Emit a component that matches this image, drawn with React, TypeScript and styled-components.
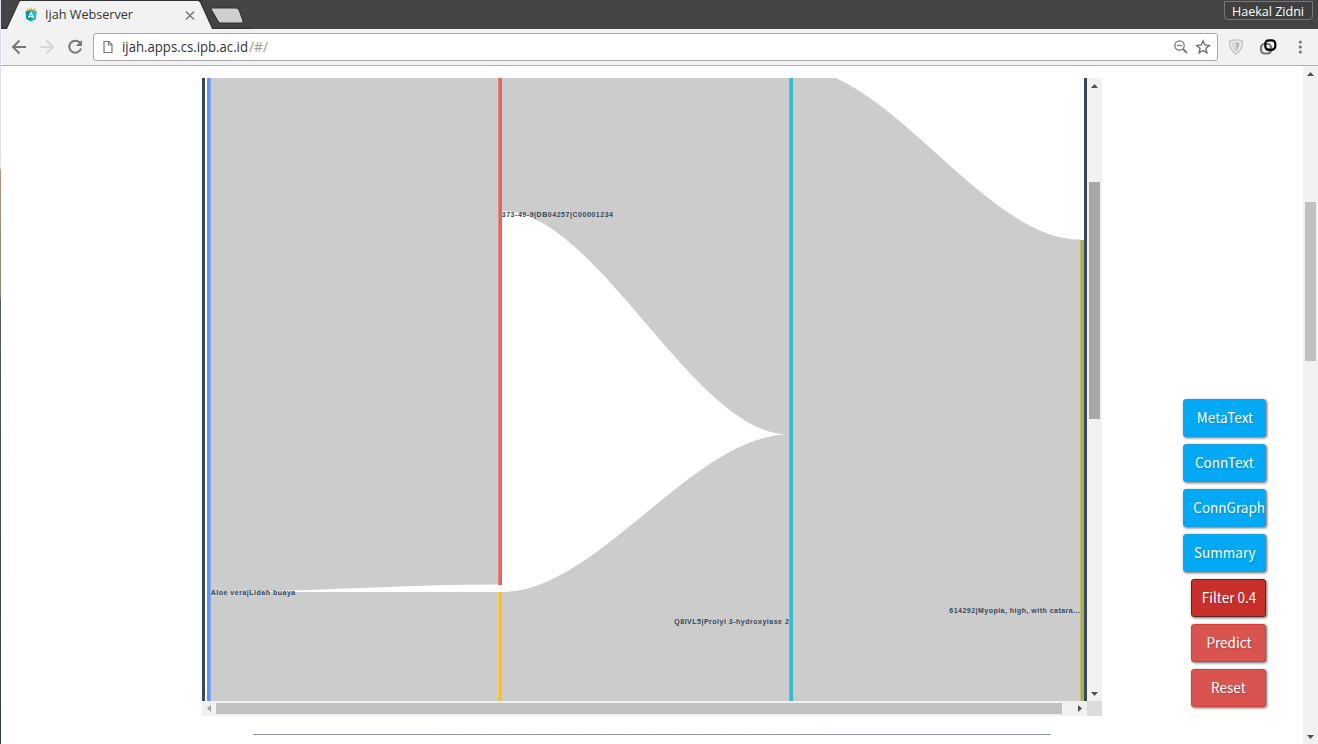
import React from "react";
import styled, { createGlobalStyle } from "styled-components";

const Global = createGlobalStyle`
  * { box-sizing: border-box; }
  html, body { margin: 0; padding: 0; background: #fff; overflow: hidden; }
  svg { display: block; flex: none; }
`;

const Screen = styled.div`
  display: flex;
  width: 1318px;
  height: 744px;
  overflow: hidden;
  font-family: "Open Sans", sans-serif;
`;

const DesktopEdge = styled.div`
  flex: none;
  width: 1px;
  background: linear-gradient(#dcdeea 0 168px, #b7937a 170px, #a08a76 240px, #97826f 295px, #4b5f5c 302px, #3f4f50 500px, #34403f 744px);
`;

const Window = styled.div`
  flex: 1;
  min-width: 0;
  display: flex;
  flex-direction: column;
`;

const TabStrip = styled.header`
  display: flex;
  justify-content: space-between;
  height: 29px;
  background: #444;
`;

const Tab = styled.div`
  position: relative;
  display: flex;
  align-items: center;
  width: 250px;
  height: 29px;
`;

const TabShape = styled.svg`
  position: absolute;
  left: 0;
  top: 0;
`;

const TabContent = styled.div`
  position: relative;
  display: flex;
  align-items: center;
  padding-left: 24px;
`;

const FittedText = styled.svg`
  overflow: visible;
`;

const Profile = styled.div`
  display: flex;
  width: 89px;
  height: 19px;
  margin: 1px 5px 0 0;
  padding: 0 0 0 7px;
  background: #3f3f3f;
  border: 1px solid #777;
  border-radius: 1px 1px 4px 4px;
`;

const Toolbar = styled.div`
  display: flex;
  align-items: center;
  height: 37px;
  padding: 0 0 1px 10px;
  background: #f2f2f2;
  border-bottom: 1px solid #b3b3b3;
`;

const NavIcons = styled.div`
  display: flex;
  gap: 12px;
`;

const AddressBar = styled.div`
  display: flex;
  align-items: center;
  width: 1125px;
  height: 28px;
  margin-left: 10px;
  padding: 0 6px 0 8px;
  background: #fff;
  border: 1px solid #aaa;
  border-radius: 3px;
`;

const Spacer = styled.div`
  flex: 1;
`;

const Page = styled.main`
  flex: 1;
  min-height: 0;
  display: flex;
`;

const Content = styled.div`
  width: 1101px;
  padding: 12px 0 0 201px;
`;

const ChartFrame = styled.section`
  display: grid;
  grid-template-columns: 885px 15px;
  grid-template-rows: 623px 15px;
  width: 900px;
`;

const ChartView = styled.div`
  border: solid #34495e;
  border-width: 0 3px;
`;

const Track = styled.div<{ $horizontal?: boolean }>`
  display: flex;
  flex-direction: ${(p) => (p.$horizontal ? "row" : "column")};
  align-items: center;
  background: #f1f1f1;
`;

const Thumb = styled.div<{ $w: number; $h: number; $color: string }>`
  width: ${(p) => p.$w}px;
  height: ${(p) => p.$h}px;
  background: ${(p) => p.$color};
`;

const Gap = styled.div<{ $size: number }>`
  flex: 0 0 ${(p) => p.$size}px;
`;

const Corner = styled.div`
  background: #dcdcdc;
`;

const Rule = styled.div`
  margin: 6px 0 0 51px;
  width: 799px;
  white-space: nowrap;
  font: 10.79px/14px "Liberation Sans", sans-serif;
  color: #6f7488;
`;

const Actions = styled.aside`
  flex: 1;
  display: flex;
  flex-direction: column;
  align-items: flex-end;
  gap: 7px;
  padding: 333px 36.7px 0 0;
`;

const ActionButton = styled.button<{ $kind: "info" | "danger" | "active" }>`
  display: flex;
  align-items: center;
  justify-content: center;
  width: ${(p) => (p.$kind === "info" ? 83 : 75.5)}px;
  height: 38px;
  padding: 0 0 2px;
  white-space: nowrap;
  color: #fff;
  font: 14.4px/20px "Noto Sans CJK SC", sans-serif;
  background: ${(p) => ({ info: "#03a9f4", danger: "#d9534f", active: "#c9302c" })[p.$kind]};
  border: 1px solid ${(p) => ({ info: "#1b9fe0", danger: "#d43f3a", active: "#5f2523" })[p.$kind]};
  border-radius: 3px;
  box-shadow: 1px 1px 3px rgba(0, 0, 0, 0.6);
  text-shadow: 1px 1px 2px rgba(0, 0, 0, 0.2);
`;

const Caption = styled.span<{ $offset?: number }>`
  display: inline-block;
  margin-left: ${(p) => p.$offset ?? 0}px;
  transform: scaleX(0.94);
`;

const Action = ({ kind, offset, children }: { kind: "info" | "danger" | "active"; offset?: number; children: string }) => (
  <ActionButton $kind={kind}>
    <Caption $offset={offset}>{children}</Caption>
  </ActionButton>
);

const Arrow = ({ dir, color = "#505050", width = 15 }: { dir: "up" | "down" | "left" | "right"; color?: string; width?: number }) => {
  const paths = { up: "M4 10 7.5 6 11 10z", down: "M4 6 7.5 10 11 6z", left: "M9 4 5 7.5 9 11z", right: "M6 4 10 7.5 6 11z" };
  return (
    <svg width={width} height="15" fill={color}>
      <path d={paths[dir]} />
    </svg>
  );
};

const labelStyle = { fontFamily: '"Liberation Sans", sans-serif', fontWeight: 700, fontSize: 7, fill: "#34495e" };

const nodes = [
  { x: 2, y: 0, h: 623, color: "#6495f0", edge: "#84acf5", edgeX: 5 },
  { x: 293, y: 0, h: 507, color: "#e0665e", edge: "#e98983", edgeX: 293 },
  { x: 293, y: 514, h: 109, color: "#f6c233", edge: "#f6c95b", edgeX: 293 },
  { x: 584, y: 0, h: 623, color: "#35bccd", edge: "#57c4d1", edgeX: 584 },
  { x: 875, y: 162, h: 461, color: "#acae4c", edge: "#bcbd77", edgeX: 875 },
];

const Sankey = () => (
  <svg width="879" height="623">
    <rect x="6" width="869" height="623" fill="#ccc" />
    <path fill="#fff" d="M588-10.400C683.700-10.400 779.300 161.500 875 161.500H879V-10.400z" />
    <path fill="#fff" d="M297 133C392.700 133 488.300 356.500 584 356.500C488.300 356.500 392.700 514 297 514z" />
    <path fill="#fff" d="M6 514C101.700 514 197.300 506.500 293 506.500H297V514z" />
    {nodes.map((n, i) => (
      <g key={i}>
        <rect x={n.x} y={n.y} width="4" height={n.h} fill={n.color} />
        <rect x={n.edgeX} y={n.y} width="1" height={n.h} fill={n.edge} />
      </g>
    ))}
    <g style={labelStyle}>
      <text x="5.700" y="517" textLength="84.500">Aloe vera|Lidah buaya</text>
      <text x="296.700" y="139" textLength="111.300">373-49-9|DB04257|C00001234</text>
      <text x="469.300" y="546" textLength="114.500">Q8IVL5|Prolyl 3-hydroxylase 2</text>
      <text x="744.300" y="535" textLength="130.700">614292|Myopia, high, with catara...</text>
    </g>
  </svg>
);

export default function App() {
  return (
    <>
      <Global />
      <Screen>
        <DesktopEdge />
        <Window>
          <TabStrip>
            <Tab>
              <TabShape width="250" height="29">
                <path d="M0 28.5H6L19 1H199L211 28.5H250" fill="none" stroke="#343434" strokeWidth="2" />
                <path d="M6 29 18.5 2Q19 1 20 1H197Q198 1 199 2.500L211 29z" fill="#f2f2f2" />
                <path d="M211 8H235Q237 8 238 10L242 21Q242.500 23 241 23H220Q218 23 217 21L210 9Q210 8 211 8z" fill="#cfcfcf" stroke="#303030" />
              </TabShape>
              <TabContent>
                <svg width="12" height="15" viewBox="0 0 12 15">
                  <path d="M1.500 4 2 1 4 2.500 6 0 8 2.500 11 1 10.500 5z" fill="#fbc02d" />
                  <path d="M.5 4.500 6 3 11.500 4.500 10.800 12 6 14.500 1.200 12z" fill="#0097a7" />
                  <path d="M6 3 11.500 4.500 10.800 12 6 14.500z" fill="#26b9cf" />
                  <path d="M3.500 11 6 5.500 8.500 11M4.500 9.500H7.500" fill="none" stroke="#e9ffff" strokeWidth="1.200" />
                </svg>
                <FittedText width="141" height="20">
                  <text x="8" y="14" fontSize="13.500" fill="#333" textLength="88" lengthAdjust="spacingAndGlyphs">Ijah Webserver</text>
                </FittedText>
                <svg width="24" height="20"><path d="M8 6.500 16 14.500M16 6.500 8 14.500" stroke="#808080" strokeWidth="1.700" /></svg>
              </TabContent>
            </Tab>
            <Profile>
              <FittedText width="72" height="18">
                <text x="0" y="14" fontSize="13" fill="#fff" textLength="72" lengthAdjust="spacingAndGlyphs">Haekal Zidni</text>
              </FittedText>
            </Profile>
          </TabStrip>
          <Toolbar>
            <NavIcons>
              <svg width="16" height="16" fill="none" stroke="#777" strokeWidth="2"><path d="M15 8H2M8.500 1.500 2 8 8.500 14.500" /></svg>
              <svg width="16" height="16" fill="none" stroke="#d8d8d8" strokeWidth="2"><path d="M1 8H14M7.500 1.500 14 8 7.500 14.500" /></svg>
              <svg width="16" height="16" fill="none" stroke="#777" strokeWidth="2"><path d="M13.200 4.200A6 6 0 1 0 14 9.500" /><path d="M15 1V7H9z" fill="#777" stroke="none" /></svg>
            </NavIcons>
            <AddressBar>
              <svg width="12" height="14" fill="none" stroke="#777" strokeWidth="1.200"><path d="M2 1.500H7L10 4.500V12.500H2zM6.500 1.500V5H10" /></svg>
              <FittedText width="170" height="22">
                <text x="8" y="16" fontSize="14.500" fill="#333" textLength="126" lengthAdjust="spacingAndGlyphs">ijah.apps.cs.ipb.ac.id</text>
                <text x="135" y="16" fontSize="14.500" fill="#999" textLength="19" lengthAdjust="spacingAndGlyphs">/#/</text>
              </FittedText>
              <Spacer />
              <svg width="16" height="16" fill="none" stroke="#777" strokeWidth="1.300"><circle cx="6.500" cy="6.500" r="4.700" /><path d="M4 6.500H9" /><path d="M10 10 14 14" strokeWidth="1.800" /></svg>
              <Gap $size={6} />
              <svg width="16" height="16" fill="none" stroke="#666" strokeWidth="1.300"><path d="M8 1.800 9.800 6 14.300 6.400 10.900 9.400 11.900 13.800 8 11.500 4.100 13.800 5.100 9.400 1.700 6.400 6.200 6z" /></svg>
            </AddressBar>
            <Gap $size={10} />
            <svg width="16" height="16" fill="none"><path d="M1.500 2Q8 0 14.500 2Q14.500 11 8 15Q1.500 11 1.500 2z" fill="#ededed" stroke="#c6c6c6" strokeWidth="1.500" /><path d="M4.500 4Q8 3 8 3V12Q4.500 9 4.500 4z" fill="#e0e0e0" stroke="#c6c6c6" strokeWidth=".8" /><path d="M8 3Q11.500 3.500 11.500 4Q11.500 9 8 12z" fill="#bbb" /></svg>
            <Gap $size={15} />
            <svg width="18" height="18" fill="none" strokeWidth="2.200"><rect x="2" y="6" width="10" height="9.500" rx="3.500" stroke="#777" /><rect x="6.300" y="2.300" width="10" height="9.500" rx="3.500" stroke="#050505" /><path d="M12 8.500V11.500Q12 14.500 9.500 15.400" stroke="#777" /><path d="M7 10.500Q8 11.800 10 11.800H13.500" stroke="#050505" /></svg>
            <Gap $size={19} />
            <svg width="8" height="16" fill="#777"><circle cx="4.300" cy="3" r="1.600" /><circle cx="4.300" cy="8" r="1.600" /><circle cx="4.300" cy="13" r="1.600" /></svg>
          </Toolbar>
          <Page>
            <Content>
              <ChartFrame>
                <ChartView><Sankey /></ChartView>
                <Track>
                  <Arrow dir="up" /><Gap $size={89} /><Thumb $w={11} $h={237} $color="#a8a8a8" /><Spacer /><Arrow dir="down" />
                </Track>
                <Track $horizontal>
                  <Arrow dir="left" color="#a3a3a3" width={14} /><Thumb $w={846} $h={11} $color="#c1c1c1" /><Spacer /><Arrow dir="right" />
                </Track>
                <Corner />
              </ChartFrame>
              <Rule>{"_".repeat(133)}</Rule>
            </Content>
            <Actions>
              <Action kind="info">MetaText</Action>
              <Action kind="info">ConnText</Action>
              <Action kind="info" offset={8}>ConnGraph</Action>
              <Action kind="info">Summary</Action>
              <Action kind="active">Filter 0.4</Action>
              <Action kind="danger">Predict</Action>
              <Action kind="danger">Reset</Action>
            </Actions>
            <Track>
              <Arrow dir="up" /><Gap $size={121} /><Thumb $w={11} $h={159} $color="#c1c1c1" /><Spacer /><Arrow dir="down" />
            </Track>
          </Page>
        </Window>
      </Screen>
    </>
  );
}
